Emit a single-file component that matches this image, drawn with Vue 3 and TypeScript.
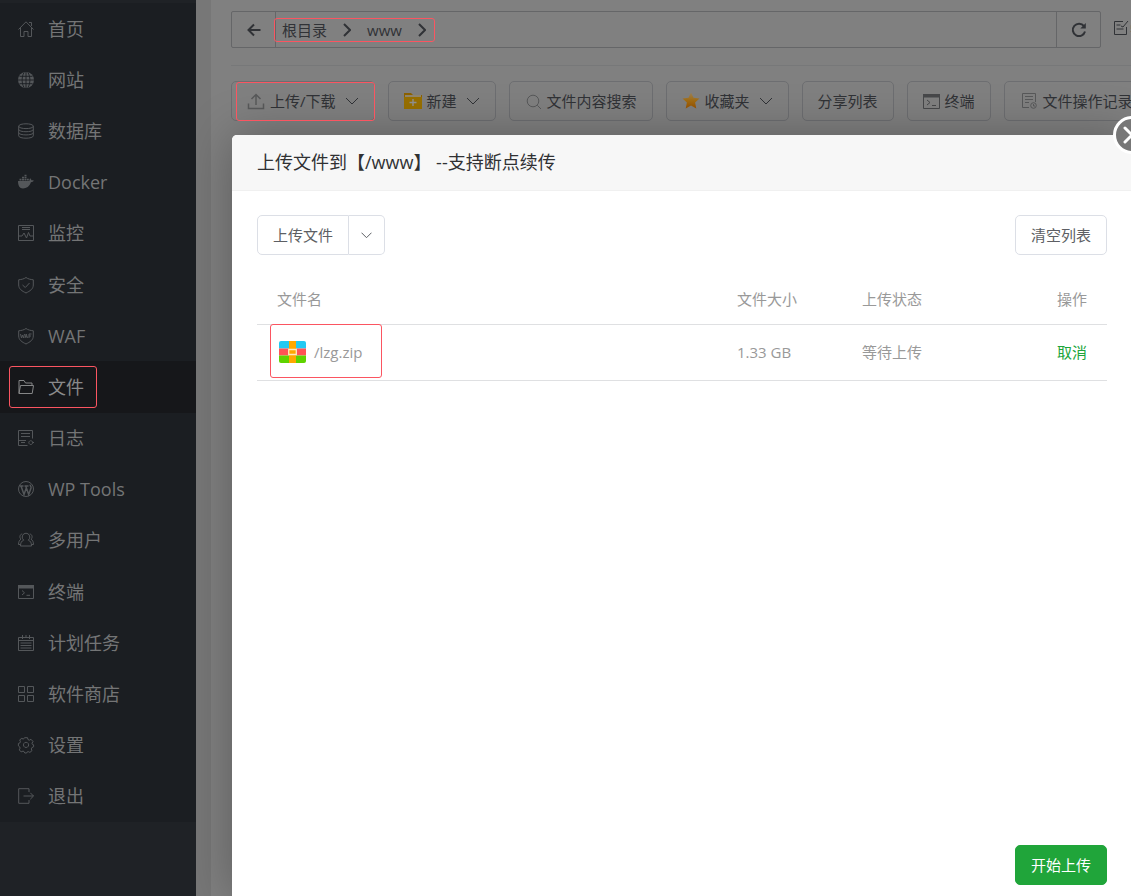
<script setup lang="ts">
interface NavItem {
  label: string
  icon: string
  active?: boolean
}

interface UploadFile {
  name: string
  size: string
  status: string
}

const navItems: NavItem[] = [
  { label: '首页', icon: 'home' },
  { label: '网站', icon: 'globe' },
  { label: '数据库', icon: 'database' },
  { label: 'Docker', icon: 'docker' },
  { label: '监控', icon: 'monitor' },
  { label: '安全', icon: 'shield' },
  { label: 'WAF', icon: 'waf' },
  { label: '文件', icon: 'folder', active: true },
  { label: '日志', icon: 'log' },
  { label: 'WP Tools', icon: 'wordpress' },
  { label: '多用户', icon: 'users' },
  { label: '终端', icon: 'terminal' },
  { label: '计划任务', icon: 'calendar' },
  { label: '软件商店', icon: 'apps' },
  { label: '设置', icon: 'gear' },
  { label: '退出', icon: 'exit' },
]

const strokes: Record<string, string> = {
  home: 'M.5 8.5 8 .8l7.500 7.700M2.500 7v8.500h3.500v-5h4v5h3.500V7M11 1.500h2.500V5',
  database:
    'M.7 3.200c0-3.200 14.600-3.200 14.600 0s-14.600 3.200-14.600 0v9.600c0 3.200 14.600 3.200 14.600 0V3.200M.7 6.400c0 3.100 14.600 3.100 14.600 0M.7 9.600c0 3.100 14.600 3.100 14.600 0',
  monitor: 'M.5.5h15v15H.5zM4 2.500h8M4 4.500h8M1 11h3l2-3 2.500 5 2-5.500 1.500 3.500h3',
  shield: 'M8 .5c2 1.500 4.500 2 7.300 2.300V8c0 4-3.300 6-7.300 8C4 14 .7 12 .7 8V2.800C3.500 2.500 6 2 8 .5zM4.500 8 7.300 10.500 11.500 6',
  folder: 'M1 14.500V1.500h5l1.500 2.500h6.500v2.500M1 14.500 2.500 6.500h13l-1.300 8z',
  log: 'M14.500 8.500V.5H.5v15h9M3 3.500h9M3 6.500h9M1 10.500h7M3 12.500h4M12.700 10.700a1.900 1.900 0 1 0 .1 0M14.500 12.500h1.500',
  users:
    'M8 1.200a3.900 3.900 0 0 1 2.300 7c2.200.8 3.200 2.500 3.200 5.800H2.500c0-3.300 1-5 3.200-5.800A3.900 3.900 0 0 1 8 1.200zM4.200 2C1.500 2.300 1.300 6 3 7.200 1.200 8.200.6 10 .5 12.500H2.500M11.800 2c2.700.3 2.900 4 1.200 5.200 1.800 1 2.400 2.800 2.500 5.300H13.500',
  calendar: 'M.5 2.500h15v13H.5zM.5 5.500h15M4.500 0v4M8 0v2.500M11.500 0v4M2.500 8h11M2.500 10.500h11M2.500 13h11',
  apps: 'M.5.5h6v6h-6zM9.500.5h6v6h-6zM.5 9.500h6v6h-6zM9.500 9.500h6v6h-6z',
  gear: 'M6.500.7h3l.5 1.900 1.300.6L13 2.300 15 4.500l-1 1.700.4 1.200 1.200.4v2l-1.700.8-.6 1.300.7 1.700-2.100 1.800-1.700-.8-1 .3-.6 1.100H6.800l-.7-1.400-1.100-.5-1.900.8-1.800-2 .8-1.800-.4-1.200L.4 8.900V6.500l1.500-.6.500-1.200-.7-1.800L3.900 1.300l1.400.9zM8 5.300A2.600 2.600 0 1 0 8.100 5.300',
  exit: 'M11 4V.7H.7v14.600H11V12M5.500 8h10M12.300 4.800 15.500 8l-3.200 3.200',
}

const crumbs: string[] = ['根目录', 'www']

const files: UploadFile[] = [{ name: '/lzg.zip', size: '1.33 GB', status: '等待上传' }]
</script>

<template>
  <div class="page">
    <aside class="sidebar">
      <nav class="nav" aria-label="主菜单">
        <a v-for="item in navItems" :key="item.label" href="#" class="nav-item" :class="{ active: item.active }">
          <svg class="nav-icon" viewBox="0 0 16 16" aria-hidden="true">
            <path v-if="strokes[item.icon]" :d="strokes[item.icon]" class="line" />
            <g v-else-if="item.icon === 'globe'">
              <circle cx="8" cy="8" r="8" class="solid" />
              <path d="M8 0v16M0 8h16M1.500 4.300h13M1.500 11.700h13M6 .5C3.500 5 3.500 11 6 15.500M10 .5c2.500 4.500 2.500 10.500 0 15" class="cut" />
            </g>
            <g v-else-if="item.icon === 'docker'" class="solid">
              <path d="M0 7h11.300c.3-1 .2-1.800.8-2.700.9.5 1.200 1.200 1.300 1.900.9-.1 1.700 0 2.400.4-.5 1.200-1.500 1.700-2.900 1.700C11.500 12.500 8.500 14.500 5 14.500 1.500 14.500 0 11.500 0 7z" />
              <path d="M1.500 4.700h2v1.800h-2zM4 4.700h2v1.800H4zM6.500 4.700h2v1.800h-2zM9 4.700h1.800v1.800H9zM4 2.700h2v1.500H4zM6.500 2.700h2v1.500h-2zM6.500.7h2v1.500h-2z" />
            </g>
            <g v-else-if="item.icon === 'waf'">
              <path d="M8 .5c2 1.500 4.500 2 7.300 2.300V8c0 4-3.300 6-7.300 8C4 14 .7 12 .7 8V2.800C3.500 2.500 6 2 8 .5z" class="line" />
              <path d="M2.500 6l1 4 1-3 1 3 1-4M7 10l1.200-4 1.300 4M7.500 8.800h1.600M11 10V6h2.500M11 8h2" class="line" />
            </g>
            <g v-else-if="item.icon === 'wordpress'">
              <circle cx="8" cy="8" r="7.500" class="line" />
              <path d="M1.500 5H5.500M3 5l3 8.500L8.300 7M6.500 5h4M7.700 5l3 8.500L13 7c.4-1.500-1-2-.8-3.300" class="line bold" />
            </g>
            <g v-else>
              <path d="M.5 1.500h15v13H.5zM4 6.500 6.500 8.800 4 11M8.500 11.300h3.500" class="line" />
              <path d="M0 1h16v3.500H0z" class="solid" />
            </g>
          </svg>
          <span>{{ item.label }}</span>
          <i v-if="item.active" class="mark mark-nav"></i>
        </a>
      </nav>
    </aside>

    <main class="main">
      <div class="path-row">
        <div class="path-bar">
          <button type="button" class="back" aria-label="返回">
            <svg width="14" height="14" viewBox="0 0 14 14"><path d="M13.500 7H1.500M7 1.500 1.500 7 7 12.500" class="thick" /></svg>
          </button>
          <div class="crumbs">
            <template v-for="crumb in crumbs" :key="crumb">
              <a href="#">{{ crumb }}</a>
              <svg width="8" height="14" viewBox="0 0 8 14" aria-hidden="true"><path d="M1 1l6 6-6 6" class="thick" /></svg>
            </template>
            <i class="mark mark-crumbs"></i>
          </div>
          <button type="button" class="refresh" aria-label="刷新">
            <svg width="16" height="16" viewBox="0 0 16 16"><path d="M14 9.500A6.200 6.200 0 1 1 13 4.200" class="thick" /><path d="M14.800 1v5.500H9.300z" fill="currentColor" /></svg>
          </button>
        </div>
        <a href="#" class="feedback">
          <svg width="16" height="16" viewBox="0 0 16 16" aria-hidden="true"><path d="M10 1.500H1.500v13h12V7M3.500 5h4M3.500 9h7M8 6l2 1 5-6" class="thin" /></svg>
          <span>需求反馈</span>
        </a>
      </div>

      <div class="toolbar">
        <button type="button" class="tool">
          <svg class="soft" width="18" height="18" viewBox="0 0 18 18"><path d="M1.500 11.500v5h15v-5M9 13V2.500M4.500 7 9 2.500 13.500 7" class="medium" /></svg>
          <span>上传/下载</span>
          <svg class="chev" width="14" height="8" viewBox="0 0 14 8"><path d="M1 1l6 6 6-6" class="thin" /></svg>
          <i class="mark mark-upload"></i>
        </button>
        <button type="button" class="tool">
          <svg width="18" height="16" viewBox="0 0 18 16"><path d="M0 0h7l2 2h9v14H0z" fill="#8c6200" /><path d="M0 4h18v12H0z" fill="#987000" /><path d="M1 3h16M9 6v7M5.500 9.500h7" stroke="#929292" stroke-width="1.400" /></svg>
          <span>新建</span>
          <svg class="chev" width="14" height="8" viewBox="0 0 14 8"><path d="M1 1l6 6 6-6" class="thin" /></svg>
        </button>
        <button type="button" class="tool">
          <svg class="soft" width="17" height="17" viewBox="0 0 17 17"><circle cx="8" cy="8" r="5.800" class="thin" /><path d="M12.300 12.300 16 16" class="thin" /></svg>
          <span>文件内容搜索</span>
        </button>
        <button type="button" class="tool">
          <svg width="18" height="18" viewBox="0 0 18 18">
            <defs><linearGradient id="star" x1="0" y1="0" x2="0" y2="1"><stop offset="0" stop-color="#9b8258" /><stop offset=".5" stop-color="#a36d13" /><stop offset="1" stop-color="#985200" /></linearGradient></defs>
            <path d="M9 .5l2.500 5.300 6 .7-4.400 4 1.200 6L9 13.600l-5.300 2.900 1.200-6-4.400-4 6-.7z" fill="url(#star)" />
          </svg>
          <span>收藏夹</span>
          <svg class="chev" width="14" height="8" viewBox="0 0 14 8"><path d="M1 1l6 6 6-6" class="thin" /></svg>
        </button>
        <button type="button" class="tool"><span>分享列表</span></button>
        <button type="button" class="tool">
          <svg class="soft dark" width="17" height="15" viewBox="0 0 17 15"><path d="M.5.5h16v14H.5zM4 6l3 2.500L4 11M9 11.500h4" class="thin" /><path d="M0 0h17v3.500H0z" fill="currentColor" /></svg>
          <span>终端</span>
        </button>
        <button type="button" class="tool">
          <svg class="soft" width="18" height="18" viewBox="0 0 18 18"><path d="M15.500 10V1.500h-13v14H9M5 4.500h8M5 7.500h8M5 10.500h4" class="thin" /><circle cx="13.500" cy="13.500" r="2.800" class="thin" /><path d="M13.500 12v2h1.500" class="thin" /></svg>
          <span>文件操作记录</span>
        </button>
      </div>
    </main>

    <section class="dialog" role="dialog" aria-labelledby="dialog-title">
      <header class="dialog-head">
        <h2 id="dialog-title">上传文件到【/www】 --支持断点续传</h2>
        <button type="button" class="close" aria-label="关闭">
          <svg width="18" height="18" viewBox="0 0 18 18"><path d="M2 2l14 14M16 2 2 16" stroke="#fff" stroke-width="3" stroke-linecap="round" /></svg>
        </button>
      </header>
      <div class="dialog-body">
        <div class="actions">
          <div class="split">
            <button type="button" class="btn">上传文件</button>
            <button type="button" class="btn more" aria-label="更多上传方式">
              <svg width="11" height="7" viewBox="0 0 11 7"><path d="M.5.7l5 5 5-5" class="thin" /></svg>
            </button>
          </div>
          <button type="button" class="btn">清空列表</button>
        </div>
        <table class="files">
          <thead>
            <tr>
              <th scope="col">文件名</th>
              <th scope="col" class="col-size">文件大小</th>
              <th scope="col" class="col-status">上传状态</th>
              <th scope="col" class="col-op">操作</th>
            </tr>
          </thead>
          <tbody>
            <tr v-for="file in files" :key="file.name">
              <td>
                <div class="file">
                  <svg width="27" height="22" viewBox="0 0 27 22" aria-hidden="true">
                    <path d="M0 7.500V2a2 2 0 0 1 2-2h23a2 2 0 0 1 2 2v5.500z" fill="#22c9f2" />
                    <path d="M0 7.500h27v7H0z" fill="#ff5355" />
                    <path d="M0 14.500h27V20a2 2 0 0 1-2 2H2a2 2 0 0 1-2-2z" fill="#5fd300" />
                    <path d="M10 0h7v22h-7z" fill="#ffa800" />
                    <path d="M9.700 8.500h7.600v5H9.700z" fill="#ffa800" stroke="#ffe9c0" stroke-width="1.300" />
                  </svg>
                  <span>{{ file.name }}</span>
                  <i class="mark mark-file"></i>
                </div>
              </td>
              <td>{{ file.size }}</td>
              <td>{{ file.status }}</td>
              <td class="col-op"><a href="#" class="cancel">取消</a></td>
            </tr>
          </tbody>
        </table>
      </div>
      <footer class="dialog-foot">
        <button type="button" class="btn primary">开始上传</button>
      </footer>
    </section>
  </div>
</template>

<style>
body {
  margin: 0;
  background: #808080;
}
</style>

<style scoped>
.page {
  position: relative;
  display: flex;
  min-height: 100vh;
  overflow: hidden;
  background: #777;
  font-family: 'Open Sans', 'Noto Sans CJK SC', sans-serif;
  font-size: 15px;
  line-height: 20px;
}
.page *,
.page {
  box-sizing: border-box;
}
a {
  color: inherit;
  text-decoration: none;
}
button {
  font: inherit;
  cursor: pointer;
}
svg {
  flex: none;
  display: block;
}
.thin,
.medium,
.thick {
  fill: none;
  stroke: currentColor;
}
.medium {
  stroke-width: 1.5;
}
.thick {
  stroke-width: 2;
}

.sidebar {
  position: relative;
  z-index: 1;
  flex: none;
  width: 196px;
  padding-top: 3px;
  background: #1f2226;
}
.nav {
  display: grid;
  grid-auto-rows: 1fr;
  min-height: 819px;
  background: #1b1e22;
}
.nav-item {
  position: relative;
  display: flex;
  align-items: center;
  gap: 14px;
  padding-left: 18px;
  color: #747576;
  font-size: 18px;
  line-height: 24px;
}
.nav-item.active {
  background: #16171a;
  color: #8a8a8b;
}
.nav-icon {
  width: 16px;
  height: 16px;
  overflow: visible;
  color: #54575a;
}
.active .nav-icon {
  color: #858687;
}
.line {
  fill: none;
  stroke: currentColor;
}
.bold {
  stroke-width: 1.5;
}
.solid {
  fill: currentColor;
}
.cut {
  fill: none;
  stroke: #1b1e22;
  stroke-width: 0.9;
}

.mark {
  position: absolute;
  z-index: 2;
  border: 1px solid #fb5561;
  border-radius: 3px;
  pointer-events: none;
}
.mark-nav {
  inset: 5px 99px 5px 9px;
}
.mark-crumbs {
  inset: 6px -9px 5px -8px;
}
.mark-upload {
  inset: 0 -1px -1px 4px;
}
.mark-file {
  inset: -17px -20px -15px -9px;
}

.main {
  flex: 1;
  min-width: 0;
  margin-left: 15px;
  padding: 11px 0 0 20px;
  overflow: hidden;
  background: #808080;
  color: #303236;
}
.path-row {
  display: flex;
  align-items: center;
  gap: 12px;
  padding-bottom: 17px;
  border-bottom: 1px solid #777879;
}
.path-bar {
  flex: 1;
  display: flex;
  height: 37px;
  border: 1px solid #656668;
  border-radius: 2px;
}
.back,
.refresh {
  display: flex;
  align-items: center;
  justify-content: center;
  width: 44px;
  padding: 0;
  border: 0;
  background: none;
  color: #303236;
}
.back {
  border-right: 1px solid #656668;
}
.refresh {
  margin-left: auto;
  border-left: 1px solid #656668;
}
.crumbs {
  position: relative;
  display: flex;
  align-items: center;
  gap: 16px;
  margin-left: 6px;
}
.feedback {
  display: flex;
  gap: 1px;
  width: 18px;
  overflow: hidden;
  white-space: nowrap;
}
.toolbar {
  display: flex;
  gap: 13px;
  padding-top: 15px;
}
.tool {
  position: relative;
  flex: none;
  display: flex;
  align-items: center;
  gap: 5px;
  height: 40px;
  padding: 0 15px;
  border: 1px solid #6d6e71;
  border-radius: 5px;
  background: none;
  color: #303236;
  white-space: nowrap;
}
.chev {
  margin-left: 4px;
}
.soft {
  color: #58595a;
}
.dark {
  color: #47484a;
}

.dialog {
  position: absolute;
  inset: 135px 0 0 232px;
  display: flex;
  flex-direction: column;
  border-radius: 5px 0 0 0;
  background: #fff;
  box-shadow: 1px 1px 50px rgba(0, 0, 0, 0.3);
}
.dialog-head {
  position: relative;
  padding: 14px 25px 15px;
  border-bottom: 1px solid #f0f0f0;
  border-radius: 5px 0 0 0;
  background: #f7f7f7;
}
.dialog-head h2 {
  margin: 0;
  color: #303133;
  font-size: 18px;
  font-weight: 400;
  line-height: 26px;
}
.close {
  position: absolute;
  top: -19px;
  right: -20px;
  display: flex;
  align-items: center;
  justify-content: center;
  width: 38px;
  height: 38px;
  padding: 0;
  border: 3px solid #fff;
  border-radius: 50%;
  background: #777;
}
.dialog-body {
  flex: 1;
  padding: 24px 24px 0 25px;
}
.actions {
  display: flex;
  justify-content: space-between;
}
.split {
  display: flex;
}
.btn {
  height: 40px;
  padding: 0 15px;
  border: 1px solid #dcdfe6;
  border-radius: 5px;
  background: #fff;
  color: #5d5f64;
}
.split .btn:first-child {
  border-radius: 5px 0 0 5px;
}
.split .more {
  display: flex;
  align-items: center;
  padding: 0 12px;
  border-left: 0;
  border-radius: 0 5px 5px 0;
}
.files {
  width: 100%;
  margin-top: 19px;
  border-collapse: collapse;
  table-layout: fixed;
  color: #999;
}
.files th,
.files td {
  height: 50px;
  padding: 0 0 0 20px;
  border-bottom: 1px solid #dfe0e2;
  font-weight: 400;
  text-align: left;
}
.files td {
  height: 56px;
}
.col-size,
.col-status {
  width: 125px;
}
.files .col-op {
  width: 140px;
  padding: 0 20px 0 0;
  text-align: right;
}
.file {
  position: relative;
  display: flex;
  align-items: center;
  gap: 8px;
  width: fit-content;
  margin-left: 2px;
}
.cancel {
  color: #20a53a;
}
.dialog-foot {
  display: flex;
  justify-content: flex-end;
  padding: 0 24px 11px;
}
.btn.primary {
  border-color: #20a53a;
  background: #20a53a;
  color: #fff;
}
</style>
